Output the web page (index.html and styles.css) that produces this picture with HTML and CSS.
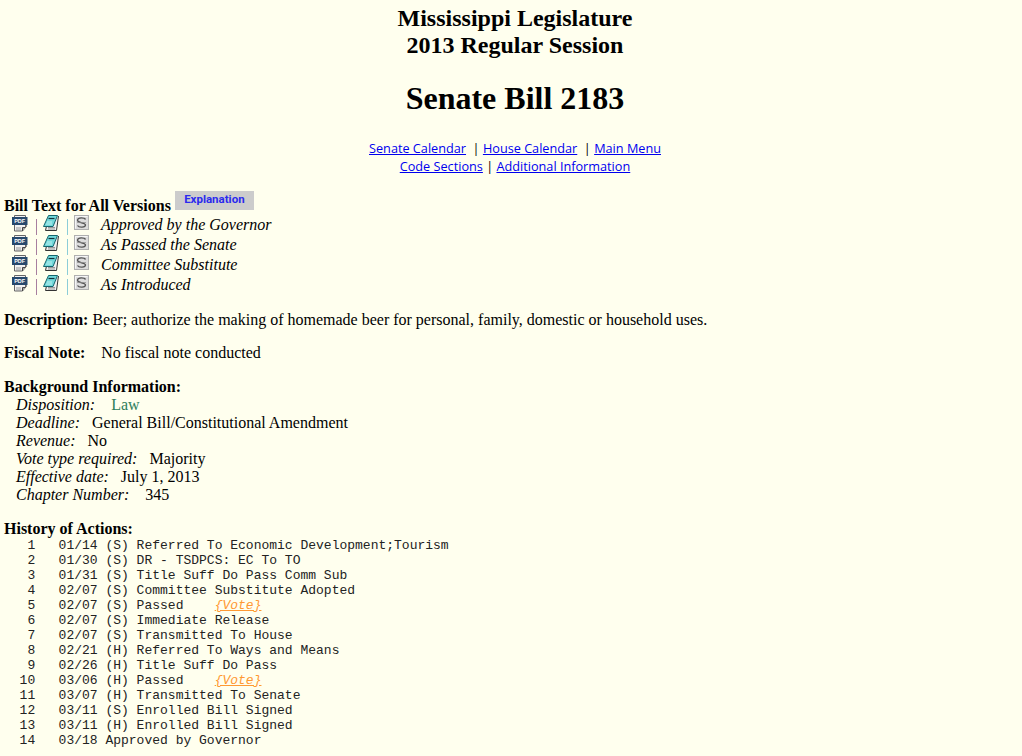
FILE: index.html
```html
<!DOCTYPE html>
<html lang="en">
<head>
<meta charset="utf-8">
<title>Senate Bill 2183</title>
<link rel="stylesheet" href="styles.css">
</head>
<body>
<svg class="defs" width="0" height="0" aria-hidden="true">
  <defs>
    <symbol id="i-pdf" viewBox="0 0 16 17">
      <path d="M2.500 .5h11v12l-3 3.500h-8z" fill="#f2f2f2" stroke="#666"/>
      <path d="M10.500 16v-3.500h3" fill="#aaa" stroke="#444"/>
      <path d="M4 13h5M4 15h5" stroke="#999"/>
      <path d="M14.500 2v10" stroke="#888"/>
      <rect x="0" y="2" width="15.500" height="8" fill="#27496d"/>
      <text x="7.700" y="8.400" class="pdf-label">PDF</text>
    </symbol>
    <symbol id="i-book" viewBox="0 0 17 16">
      <path d="M4.500 11 3.500 15.500H14.500L16.500 1" fill="#f0f0f0" stroke="#333"/>
      <path d="M6 12.500h7M6 14h7" stroke="#999"/>
      <path d="M6.500 .5H15.500L11 11.500H1.500z" fill="#72d8da" stroke="#14666e"/>
      <path d="M6.500 3.500h6" stroke="#12303a" stroke-width="1.200"/>
      <path d="M4 9h6M5 7h5" stroke="#bdf0f0"/>
    </symbol>
    <symbol id="i-s" viewBox="0 0 15 15">
      <rect x=".5" y=".5" width="14" height="14" fill="#dcdcdc" stroke="#b0b0b0"/>
      <path d="M1.500 13.500V1.500H13.500" fill="none" stroke="#f6f6f6"/>
      <path d="M11.500 4.500C10.500 2.500 4 2 3.500 5S11.500 7.500 11.500 10 5 13 3.500 10.500" fill="none" stroke="#555" stroke-width="1.300"/>
      <path d="M3 7.500h9" stroke="#888" stroke-width=".7"/>
    </symbol>
  </defs>
</svg>

<header class="masthead">
  <h3 class="session">Mississippi Legislature<br>2013 Regular Session</h3>
  <h1 class="bill">Senate Bill 2183</h1>
  <nav class="nav">
    <div><a href="#">Senate Calendar</a>&nbsp; | <a href="#">House Calendar</a>&nbsp; | <a href="#">Main Menu</a></div>
    <div><a href="#">Code Sections</a> | <a href="#">Additional Information</a></div>
  </nav>
</header>

<section class="versions">
  <div class="versions-head"><b>Bill Text for All Versions</b><a class="explain" href="#">Explanation</a></div>
  <div class="version">
    <svg class="ico pdf"><use href="#i-pdf"/></svg><i class="sep sep-a"></i>
    <svg class="ico book"><use href="#i-book"/></svg><i class="sep sep-b"></i>
    <svg class="ico s"><use href="#i-s"/></svg>
    <em class="vname">Approved by the Governor</em>
  </div>
  <div class="version">
    <svg class="ico pdf"><use href="#i-pdf"/></svg><i class="sep sep-a"></i>
    <svg class="ico book"><use href="#i-book"/></svg><i class="sep sep-b"></i>
    <svg class="ico s"><use href="#i-s"/></svg>
    <em class="vname">As Passed the Senate</em>
  </div>
  <div class="version">
    <svg class="ico pdf"><use href="#i-pdf"/></svg><i class="sep sep-a"></i>
    <svg class="ico book"><use href="#i-book"/></svg><i class="sep sep-b"></i>
    <svg class="ico s"><use href="#i-s"/></svg>
    <em class="vname">Committee Substitute</em>
  </div>
  <div class="version">
    <svg class="ico pdf"><use href="#i-pdf"/></svg><i class="sep sep-a"></i>
    <svg class="ico book"><use href="#i-book"/></svg><i class="sep sep-b"></i>
    <svg class="ico s"><use href="#i-s"/></svg>
    <em class="vname">As Introduced</em>
  </div>
</section>

<p class="para"><b>Description:</b> Beer; authorize the making of homemade beer for personal, family, domestic or household uses.</p>
<p class="para para-tight"><b>Fiscal Note:</b>&nbsp;&nbsp;&nbsp; No fiscal note conducted</p>

<section class="background">
  <b>Background Information:</b>
  <div class="bg-row"><em>Disposition:</em>&nbsp;&nbsp;&nbsp; <span class="law">Law</span></div>
  <div class="bg-row"><em>Deadline:</em>&nbsp;&nbsp; General Bill/Constitutional Amendment</div>
  <div class="bg-row"><em>Revenue:</em>&nbsp;&nbsp; No</div>
  <div class="bg-row"><em>Vote type required:</em>&nbsp;&nbsp; Majority</div>
  <div class="bg-row"><em>Effective date:</em>&nbsp;&nbsp; July 1, 2013</div>
  <div class="bg-row"><em>Chapter Number:</em>&nbsp;&nbsp;&nbsp; 345</div>
</section>

<section class="history">
  <b>History of Actions:</b>
  <div class="actions">
    <div class="action">   1   01/14 (S) Referred To Economic Development;Tourism</div>
    <div class="action">   2   01/30 (S) DR - TSDPCS: EC To TO</div>
    <div class="action">   3   01/31 (S) Title Suff Do Pass Comm Sub</div>
    <div class="action">   4   02/07 (S) Committee Substitute Adopted</div>
    <div class="action">   5   02/07 (S) Passed    <a class="vote" href="#">{Vote}</a></div>
    <div class="action">   6   02/07 (S) Immediate Release</div>
    <div class="action">   7   02/07 (S) Transmitted To House</div>
    <div class="action">   8   02/21 (H) Referred To Ways and Means</div>
    <div class="action">   9   02/26 (H) Title Suff Do Pass</div>
    <div class="action">  10   03/06 (H) Passed    <a class="vote" href="#">{Vote}</a></div>
    <div class="action">  11   03/07 (H) Transmitted To Senate</div>
    <div class="action">  12   03/11 (S) Enrolled Bill Signed</div>
    <div class="action">  13   03/11 (H) Enrolled Bill Signed</div>
    <div class="action">  14   03/18 Approved by Governor</div>
  </div>
</section>
</body>
</html>
```
FILE: styles.css
```css
html, body { margin: 0; padding: 0; }
body {
  background: #ffffee;
  color: #000;
  font-family: "Liberation Serif", serif;
  font-size: 16px;
  line-height: 18px;
  padding: 5px 4px 0;
  overflow: hidden;
  height: 751px;
  box-sizing: border-box;
}
.defs { position: absolute; }
.masthead { text-align: center; padding-left: 8px; }
.session { margin: 0; font-size: 24px; line-height: 27px; font-weight: bold; }
.bill { margin: 21px 0 0; font-size: 32px; line-height: 37px; font-weight: bold; }
.nav { margin-top: 22px; font-family: "Open Sans", sans-serif; font-size: 12.700px; line-height: 18px; }
.nav a { color: #0000ee; }
.versions { margin-top: 16px; }
.versions-head { display: flex; align-items: flex-end; height: 24px; }
.explain {
  align-self: flex-start;
  margin-left: 4px;
  width: 79px;
  height: 19px;
  background: #cccccc;
  color: #2a2aee;
  font: bold 11.500px/17px "Roboto", sans-serif;
  text-align: center;
  text-decoration: none;
}
.version { display: flex; align-items: flex-start; height: 20px; }
.ico { flex: none; display: block; }
.pdf { width: 16px; height: 17px; margin-left: 8px; }
.book { width: 17px; height: 16px; margin-left: 5px; }
.s { width: 15px; height: 15px; margin-left: 6px; }
.sep { flex: none; width: 1px; height: 16px; margin: 4px 0 0 8px; }
.sep-a { background: #a87f9f; }
.sep-b { background: #8ccdd8; margin-left: 8px; }
.vname { margin: 1px 0 0 12px; }
.pdf-label { font: bold 5.500px "Liberation Sans", sans-serif; fill: #fff; text-anchor: middle; }
.para { margin: 16px 0 0; }
.para-tight { margin-top: 15px; }
.background { margin-top: 16px; }
.bg-row { padding-left: 12px; }
.law { color: #2e7d5b; }
.history { margin-top: 16px; }
.actions {
  font-family: "Liberation Mono", monospace;
  font-size: 13px;
  line-height: 15px;
  color: #222;
}
.action { white-space: pre; }
.vote { color: #ff9933; font-style: italic; }
```
